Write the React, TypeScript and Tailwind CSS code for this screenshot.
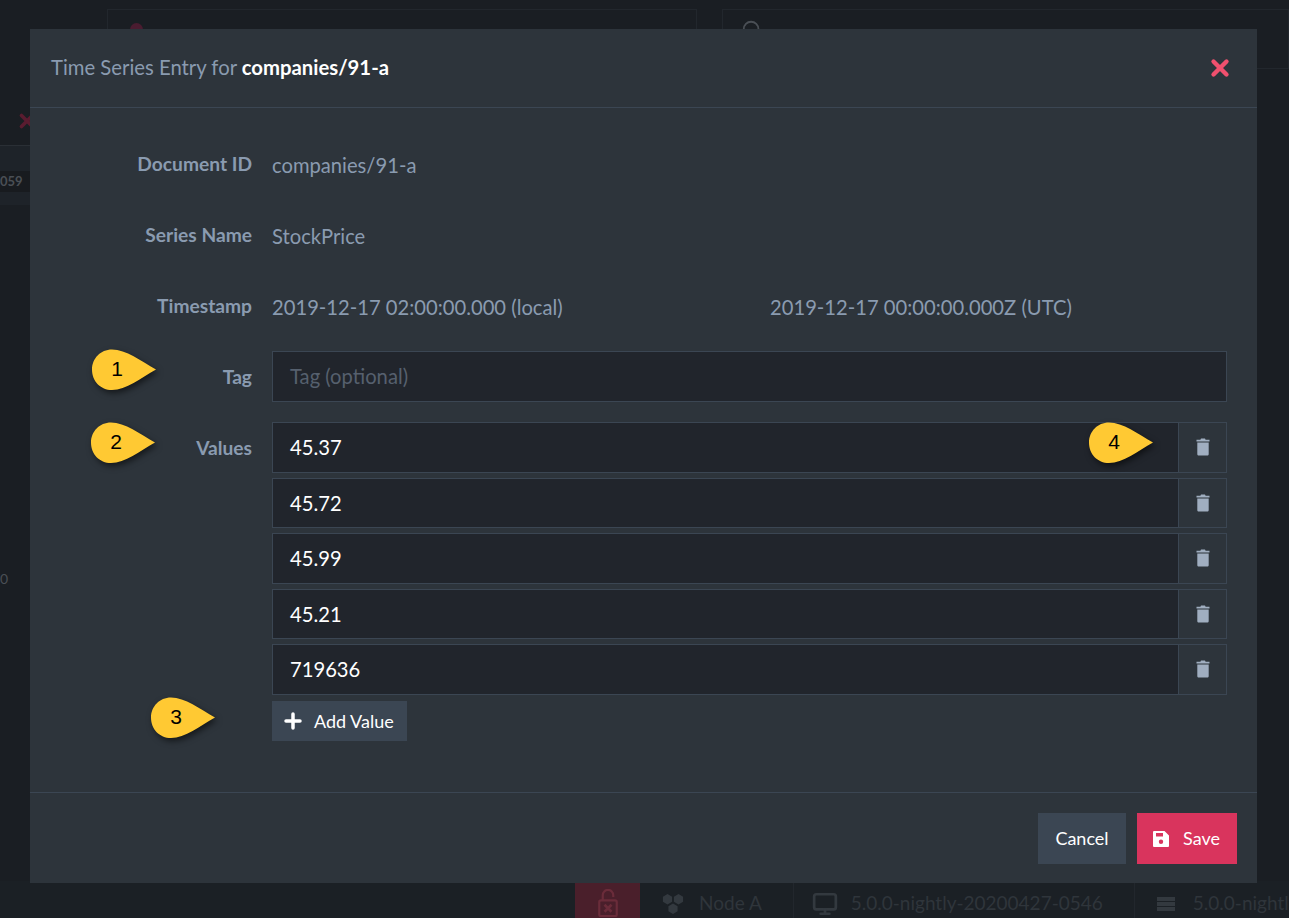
import React from "react";
import { Plus, X, Search, Monitor } from "lucide-react";

const VALUES = ["45.37", "45.72", "45.99", "45.21", "719636"];

// speech-bubble marker used for the numbered callouts
const Callout = ({ n, className }: { n: number; className: string }) => (
  <div className={`absolute w-[66px] h-[44px] ${className}`}>
    <svg width="66" height="44" viewBox="0 0 66 44" className="absolute inset-0 drop-shadow-[2px_3px_3px_rgba(0,0,0,0.55)]">
      <path d="M21 1.5C35 1.5 50 13 65 21.5C50 30 35 42 21 42C9.500 42 1 33 1 21.700C1 10.500 9.500 1.500 21 1.500Z" fill="#ffc933" />
    </svg>
    <span className="absolute left-[15px] top-[9px] w-[22px] text-center text-[21px] leading-[24px] text-black font-['Liberation_Sans',sans-serif]">
      {n}
    </span>
  </div>
);

const TrashIcon = () => (
  <svg width="14" height="18" viewBox="0 0 14 18" fill="#a0aec0">
    <path d="M5 0.5h4l0.600 1.200H13.500v1.800H0.500V1.700H4.400Z" />
    <path d="M1.300 4.500h11.400V16c0 1-0.700 1.600-1.500 1.600H2.800c-0.800 0-1.500-0.600-1.500-1.600Z" />
  </svg>
);

const SaveIcon = () => (
  <svg width="16" height="16" viewBox="0 0 16 16">
    <path fillRule="evenodd" fill="#fff" d="M1 0h10.500L16 4.500V15a1 1 0 0 1-1 1H1a1 1 0 0 1-1-1V1a1 1 0 0 1 1-1ZM3 2v3.500h7V2ZM8 8.500a2.200 2.200 0 1 0 0 4.400a2.200 2.200 0 0 0 0-4.400Z" />
  </svg>
);

const LockIcon = () => (
  <svg width="20" height="28" viewBox="0 0 22 32" fill="none">
    <path d="M5 13V7a6 6 0 0 1 12 0v2" stroke="#6a2c3a" strokeWidth="2.500" />
    <rect x="1" y="13" width="20" height="18" rx="2" stroke="#6a2c3a" strokeWidth="2.500" />
    <path d="M7 18l8 8M15 18l-8 8" stroke="#6a2c3a" strokeWidth="3" />
  </svg>
);

const NodesIcon = () => (
  <svg width="22" height="22" viewBox="0 0 24 22" fill="#33393f" className="shrink-0">
    <path d="M6 0l5 3v5.500l-5 3l-5-3V3Z" />
    <path d="M18 0l5 3v5.500l-5 3l-5-3V3Z" />
    <path d="M12 10.500l5 3V19l-5 3l-5-3v-5.500Z" />
  </svg>
);

const ServerIcon = () => (
  <svg width="18" height="14" viewBox="0 0 18 14" fill="#33393f" className="shrink-0">
    <rect y="0" width="18" height="4" />
    <rect y="5" width="18" height="4" />
    <rect y="10" width="18" height="4" />
  </svg>
);

const Row = ({ label, children, className = "" }: { label: string; children: React.ReactNode; className?: string }) => (
  <div className={`flex ${className}`}>
    <div className="w-[242px] shrink-0 pr-[20px] text-right text-[19.200px] font-bold text-[#8a9bb0]">{label}</div>
    <div className="flex-1 min-w-0 text-[20.200px] text-[#8a9bb0]">{children}</div>
  </div>
);

export default function App() {
  return (
    <div className="relative h-[918px] overflow-hidden bg-[#1a1e23] font-['Lato',sans-serif]">
      {/* dimmed page behind the dialog */}
      <div className="flex flex-col h-full">
        <div className="flex-1 flex gap-[25px] pl-[107px] pt-[9px]">
          <div className="w-[590px] h-[60px] border border-[#22272d] pl-[22px] pt-[13px]">
            <div className="w-[13px] h-[13px] rounded-full bg-[#4a1c30]" />
          </div>
          <div className="flex-1 h-[60px] border border-[#22272d] pl-[18px] pt-[9px]">
            <Search className="w-[22px] h-[22px] text-[#4a4f55]" />
          </div>
        </div>
        <div className="flex items-center h-[37px] shrink-0 pl-[575px] bg-[#1b2025] text-[19px] text-[#2f353b] whitespace-nowrap">
          <div className="flex items-center justify-center shrink-0 w-[65px] h-full pt-[6px] bg-[#4a1f2b]">
            <LockIcon />
          </div>
          <div className="flex items-center shrink-0 gap-[15px] pl-[22px] pr-[31px] h-full pt-[8px] border-r border-[#22272d]">
            <NodesIcon />
            <span>Node A</span>
          </div>
          <div className="flex items-center shrink-0 gap-[13px] pl-[18px] pr-[31px] h-full pt-[8px] border-r border-[#22272d]">
            <Monitor className="w-[26px] h-[26px] text-[#33393f] shrink-0" strokeWidth={2.5} />
            <span>5.0.0-nightly-20200427-0546</span>
          </div>
          <div className="flex items-center shrink-0 gap-[18px] pl-[22px] h-full pt-[8px]">
            <ServerIcon />
            <span>5.0.0-nightly</span>
          </div>
        </div>
      </div>

      {/* edge of the table peeking out on the left */}
      <div className="absolute left-0 top-[145px] w-[30px] h-[60px] border-t border-[#2a2f35] bg-[#1e2329] pt-[25px] overflow-hidden">
        <div className="h-[21px] bg-[#181b1f] text-right pr-[8px] text-[13px] leading-[21px] font-bold text-[#4a4f55]">059</div>
      </div>
      <X className="absolute left-[16px] top-[110px] w-[22px] h-[22px] text-[#5a1c30]" strokeWidth={4} />
      <div className="absolute left-0 top-[570px] text-[14px] leading-[18px] text-[#4a4f55]">0</div>

      {/* dialog */}
      <div className="absolute left-[30px] top-[29px] w-[1227px] h-[854px] flex flex-col bg-[#2d343b]">
        <div className="flex items-center justify-between h-[79px] shrink-0 pl-[21px] pr-[24px] pb-px border-b border-[#3b4653]">
          <div className="text-[20.300px] text-[#8a9bb0]">
            Time Series Entry for <strong className="font-bold text-white">companies/91-a</strong>
          </div>
          <X className="w-[26px] h-[26px] text-[#f0506e]" strokeWidth={4} />
        </div>

        <div className="flex-1 flex flex-col pt-[42px] pr-[30px]">
          <Row label="Document ID" className="h-[71px]">companies/91-a</Row>
          <Row label="Series Name" className="h-[71px]">StockPrice</Row>
          <Row label="Timestamp" className="h-[59px]">
            <div className="flex">
              <div className="w-[498px]">2019-12-17 02:00:00.000 (local)</div>
              <div>2019-12-17 00:00:00.000Z (UTC)</div>
            </div>
          </Row>
          <Row label="Tag" className="h-[71px] leading-[51px]">
            <div className="h-[51px] border border-[#3b4653] bg-[#21252c] pl-[17px] leading-[49px] text-[#56606e]">Tag (optional)</div>
          </Row>
          <Row label="Values" className="leading-[52px]">
            <div className="flex flex-col gap-[5px]">
              {VALUES.map(v => (
                <div key={v} className="flex h-[50.500px]">
                  <div className="flex-1 border border-[#3b4653] bg-[#21252c] pl-[17px] leading-[48px] text-white">{v}</div>
                  <div className="w-[48px] flex items-center justify-center border border-l-0 border-[#3b4653]">
                    <TrashIcon />
                  </div>
                </div>
              ))}
              <div className="flex items-center gap-[9px] w-[135px] h-[40px] mt-px pl-[9px] bg-[#3b4653] text-[18px] text-white">
                <Plus className="w-[24px] h-[24px] shrink-0" strokeWidth={3.5} />
                <span className="leading-[40px] whitespace-nowrap">Add Value</span>
              </div>
            </div>
          </Row>
        </div>

        <div className="flex justify-end gap-[11px] h-[91px] shrink-0 pt-[20px] pr-[20px] border-t border-[#3b4653] text-[18px] text-white">
          <div className="flex items-center justify-center w-[88px] h-[51px] bg-[#3b4653]">Cancel</div>
          <div className="flex items-center gap-[14px] w-[100px] h-[51px] pl-[16px] bg-[#d9345d]">
            <SaveIcon />
            <span>Save</span>
          </div>
        </div>
      </div>

      <Callout n={1} className="left-[91px] top-[348px]" />
      <Callout n={2} className="left-[90px] top-[421px]" />
      <Callout n={3} className="left-[150px] top-[696px]" />
      <Callout n={4} className="left-[1088px] top-[421px]" />
    </div>
  );
}
